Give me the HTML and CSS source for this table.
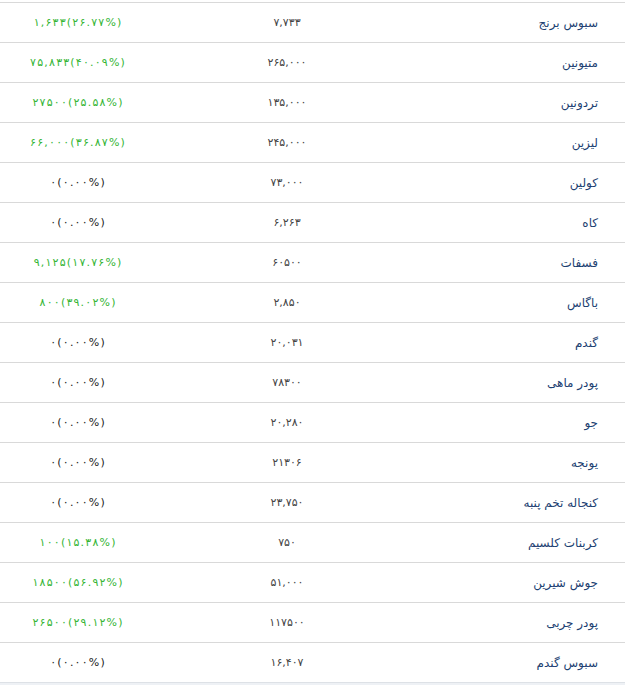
FILE: index.html
```html
<!DOCTYPE html>
<html lang="fa">
<head>
<meta charset="utf-8">
<link rel="stylesheet" href="styles.css">
</head>
<body>
<div class="table">
  <div class="row"><div class="name">سبوس برنج</div><div class="price">۷,۷۳۳</div><div class="change num up">۱,۶۳۳(۲۶.۷۷%)</div></div>
  <div class="row"><div class="name">متیونین</div><div class="price">۲۶۵,۰۰۰</div><div class="change num up">۷۵,۸۳۳(۴۰.۰۹%)</div></div>
  <div class="row"><div class="name">تردونین</div><div class="price">۱۳۵,۰۰۰</div><div class="change num up">۲۷۵۰۰(۲۵.۵۸%)</div></div>
  <div class="row"><div class="name">لیزین</div><div class="price">۲۴۵,۰۰۰</div><div class="change num up">۶۶,۰۰۰(۳۶.۸۷%)</div></div>
  <div class="row"><div class="name">کولین</div><div class="price">۷۳,۰۰۰</div><div class="change num">۰(۰.۰۰%)</div></div>
  <div class="row"><div class="name">کاه</div><div class="price">۶,۲۶۳</div><div class="change num">۰(۰.۰۰%)</div></div>
  <div class="row"><div class="name">فسفات</div><div class="price">۶۰۵۰۰</div><div class="change num up">۹,۱۲۵(۱۷.۷۶%)</div></div>
  <div class="row"><div class="name">باگاس</div><div class="price">۲,۸۵۰</div><div class="change num up">۸۰۰(۳۹.۰۲%)</div></div>
  <div class="row"><div class="name">گندم</div><div class="price">۲۰,۰۳۱</div><div class="change num">۰(۰.۰۰%)</div></div>
  <div class="row"><div class="name">پودر ماهی</div><div class="price">۷۸۳۰۰</div><div class="change num">۰(۰.۰۰%)</div></div>
  <div class="row"><div class="name">جو</div><div class="price">۲۰,۲۸۰</div><div class="change num">۰(۰.۰۰%)</div></div>
  <div class="row"><div class="name">یونجه</div><div class="price">۲۱۳۰۶</div><div class="change num">۰(۰.۰۰%)</div></div>
  <div class="row"><div class="name">کنجاله تخم پنبه</div><div class="price">۲۳,۷۵۰</div><div class="change num">۰(۰.۰۰%)</div></div>
  <div class="row"><div class="name">کربنات کلسیم</div><div class="price">۷۵۰</div><div class="change num up">۱۰۰(۱۵.۳۸%)</div></div>
  <div class="row"><div class="name">جوش شیرین</div><div class="price">۵۱,۰۰۰</div><div class="change num up">۱۸۵۰۰(۵۶.۹۲%)</div></div>
  <div class="row"><div class="name">پودر چربی</div><div class="price">۱۱۷۵۰۰</div><div class="change num up">۲۶۵۰۰(۲۹.۱۲%)</div></div>
  <div class="row"><div class="name">سبوس گندم</div><div class="price">۱۶,۴۰۷</div><div class="change num">۰(۰.۰۰%)</div></div>
</div>
<script src="script.js"></script>
</body>
</html>
```
FILE: styles.css
```css
html, body {
  margin: 0;
  padding: 0;
}
body {
  background: #eef1f5;
  font-family: "DejaVu Sans", "Noto Sans", sans-serif;
  font-size: 12px;
}
.table {
  background: #fff;
  padding-top: 2px;
  border-bottom: 1px solid #dde1e6;
}
.row {
  direction: rtl;
  display: grid;
  grid-template-columns: 189px 298px 138px;
  height: 40px;
  box-sizing: border-box;
  border-top: 1px solid #d9d9d9;
  align-items: center;
}
.name {
  color: #1d3f72;
  text-align: right;
  padding-right: 27px;
}
.price {
  color: #444;
  text-align: center;
  direction: ltr;
  font-size: 11px;
}
.change {
  color: #222;
  text-align: center;
  direction: ltr;
  font-size: 11px;
  padding-left: 17px;
}
.change .ch {
  margin: 0 0.6px;
}
.change.up {
  color: #35b535;
}
```
FILE: script.js
```js
document.querySelectorAll('.num').forEach(function (el) {
  var text = el.textContent;
  el.textContent = '';
  Array.from(text).forEach(function (c) {
    var s = document.createElement('span');
    s.className = 'ch';
    s.textContent = c;
    el.appendChild(s);
  });
});
```
